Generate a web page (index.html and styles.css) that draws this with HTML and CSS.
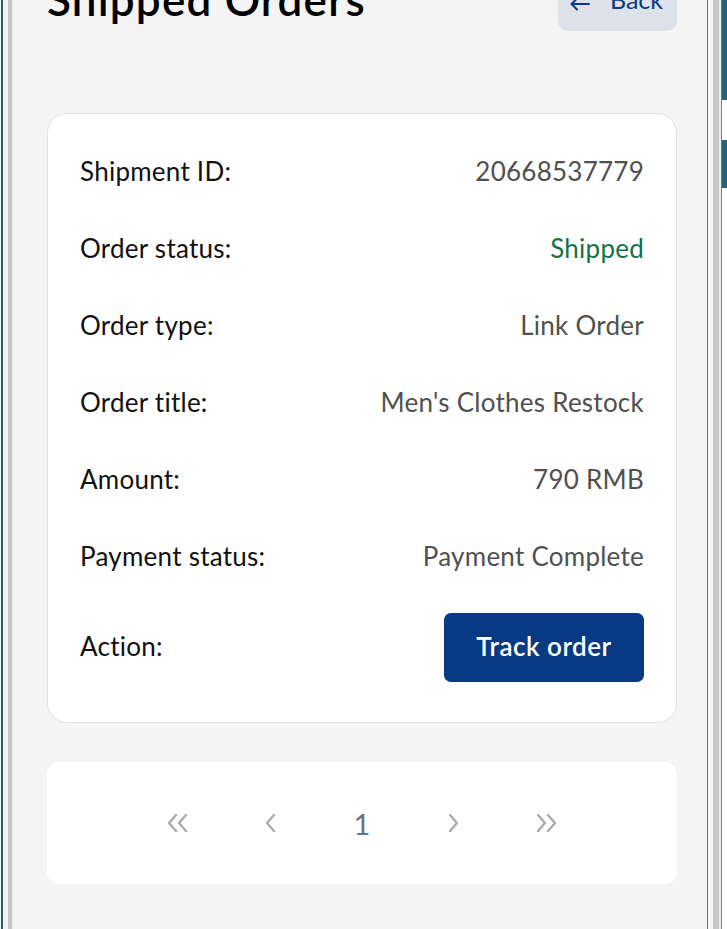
FILE: index.html
```html
<html lang="en"><head>
    <meta charset="UTF-8">
    <meta name="viewport" content="width=device-width, initial-scale=1.0">
    <title>Shipped Orders</title>
    <link rel="stylesheet" href="styles.css">
</head>
<body>
    <div class="frame">
        <div class="edge-left"></div>
        <div class="app">
            <div class="page-head">
                <h1>Shipped Orders</h1>
                <button class="back-btn">
                    <svg class="back-arrow" width="20" height="14" viewBox="0 0 20 14"><path d="M19 7H2M7 1.5L1.5 7 7 12.5" fill="none" stroke="currentColor" stroke-width="2" stroke-linecap="round" stroke-linejoin="round"/></svg>
                    <span>Back</span>
                </button>
            </div>

            <div class="order-card">
                <div class="row">
                    <span class="label">Shipment ID:</span>
                    <span class="value">20668537779</span>
                </div>
                <div class="row">
                    <span class="label">Order status:</span>
                    <span class="value shipped">Shipped</span>
                </div>
                <div class="row">
                    <span class="label">Order type:</span>
                    <span class="value">Link Order</span>
                </div>
                <div class="row">
                    <span class="label">Order title:</span>
                    <span class="value">Men's Clothes Restock</span>
                </div>
                <div class="row">
                    <span class="label">Amount:</span>
                    <span class="value">790 RMB</span>
                </div>
                <div class="row">
                    <span class="label">Payment status:</span>
                    <span class="value">Payment Complete</span>
                </div>
                <div class="row action-row">
                    <span class="label">Action:</span>
                    <button class="track-btn">Track order</button>
                </div>
            </div>

            <div class="pager">
                <span class="pg-btn">
                    <svg width="24" height="20" viewBox="0 0 24 20"><path d="M10 2L3 10l7 8M20 2l-7 8 7 8" fill="none" stroke="currentColor" stroke-width="2.4" stroke-linecap="round" stroke-linejoin="round"/></svg>
                </span>
                <span class="pg-btn">
                    <svg width="14" height="20" viewBox="0 0 14 20"><path d="M11 2L4 10l7 8" fill="none" stroke="currentColor" stroke-width="2.4" stroke-linecap="round" stroke-linejoin="round"/></svg>
                </span>
                <span class="pg-num">1</span>
                <span class="pg-btn">
                    <svg width="14" height="20" viewBox="0 0 14 20"><path d="M3 2l7 8-7 8" fill="none" stroke="currentColor" stroke-width="2.4" stroke-linecap="round" stroke-linejoin="round"/></svg>
                </span>
                <span class="pg-btn">
                    <svg width="24" height="20" viewBox="0 0 24 20"><path d="M4 2l7 8-7 8M14 2l7 8-7 8" fill="none" stroke="currentColor" stroke-width="2.4" stroke-linecap="round" stroke-linejoin="round"/></svg>
                </span>
            </div>
        </div>
        <div class="edge-right">
            <div class="tab tab-top"></div>
            <div class="tab tab-mid"></div>
        </div>
    </div>
</body></html>
```

FILE: styles.css
```css
body {
    margin: 0;
    width: 727px;
    height: 929px;
    overflow: hidden;
    background-color: #fff;
    font-family: Lato, "Noto Sans", sans-serif;
    color: #111;
}
.frame {
    display: flex;
    height: 929px;
}
.edge-left {
    width: 13px;
    flex-shrink: 0;
    background: linear-gradient(to right, #f7f7f7 0 1px, #2f5b60 1px 3px, #f1f1f1 3px 8px, #c7c7c7 8px 12px, #ececec 12px 13px);
}
.app {
    flex: 1;
    background-color: #f4f4f4;
    border-right: 1px solid #6e6e6e;
    padding: 0 30px 0 34px;
}
.edge-right {
    width: 19px;
    flex-shrink: 0;
    display: flex;
    flex-direction: column;
    align-items: flex-end;
    background: linear-gradient(to right, #f6f6f6 0 5px, #c6c6c6 5px 11px, #eeeeee 11px 13px, #7b7b7b 13px 14px, #fff 14px);
}
.tab {
    width: 5px;
    background-color: #1f6478;
}
.tab-top {
    height: 100px;
}
.tab-mid {
    height: 48px;
    margin-top: 40px;
}
.page-head {
    display: flex;
    justify-content: space-between;
    align-items: center;
    margin-top: -33px;
}
h1 {
    margin: 0;
    font-size: 44px;
    font-weight: 600;
    letter-spacing: 1.2px;
    color: #000;
}
.back-btn {
    display: flex;
    align-items: center;
    justify-content: flex-end;
    gap: 20px;
    width: 119px;
    height: 64px;
    padding: 0 14px 0 0;
    border: none;
    border-radius: 10px;
    background-color: #dde2ea;
    color: #0b3a84;
    font-family: inherit;
    font-size: 25px;
}
.back-arrow {
    margin-top: 10px;
}
.order-card {
    margin-top: 82px;
    background-color: #fff;
    border: 1px solid #e2e2e2;
    border-radius: 20px;
    padding: 33px 32px;
    display: flex;
    flex-direction: column;
    gap: 25px;
}
.row {
    box-sizing: border-box;
    display: flex;
    justify-content: space-between;
    align-items: center;
    min-height: 52px;
    padding-bottom: 4px;
    font-size: 26px;
    letter-spacing: 0.25px;
}
.label {
    color: #111;
}
.value {
    color: #505050;
}
.shipped {
    color: #127444;
}
.action-row {
    padding: 4px 0 7px;
}
.action-row .label {
    padding-bottom: 3px;
}
.track-btn {
    width: 200px;
    height: 69px;
    padding: 0 0 3px;
    border: none;
    border-radius: 7px;
    background-color: #073a82;
    color: #fff;
    font-family: inherit;
    font-size: 26px;
    font-weight: 600;
    letter-spacing: 0.5px;
}
.pager {
    margin-top: 39px;
    height: 122px;
    background-color: #fff;
    border-radius: 12px;
    display: flex;
    justify-content: center;
    align-items: center;
}
.pg-btn, .pg-num {
    width: 92px;
    display: flex;
    justify-content: center;
    align-items: center;
}
.pg-btn {
    color: #a7abb5;
}
.pg-num {
    color: #6b7280;
    font-size: 29px;
}
```
